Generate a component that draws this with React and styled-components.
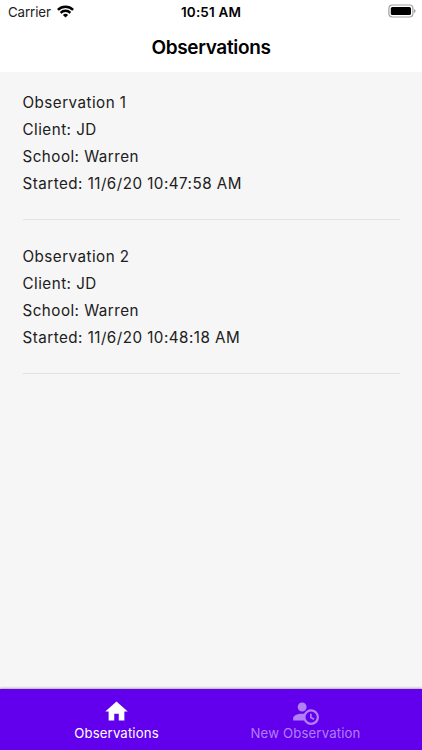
import React from "react";
import styled, { createGlobalStyle } from "styled-components";

const GlobalStyle = createGlobalStyle`
  *, *::before, *::after { box-sizing: border-box; }
  body { margin: 0; background: #f6f6f6; font-family: Inter, "Liberation Sans", sans-serif; }
`;

const Screen = styled.div`
  display: flex;
  flex-direction: column;
  width: 422px;
  height: 750px;
  background: #f6f6f6;
  overflow: hidden;
`;

const Header = styled.header`
  flex: 0 0 72px;
  background: #fff;
  color: #000;
`;

const StatusBar = styled.div`
  display: grid;
  grid-template-columns: 1fr auto 1fr;
  align-items: center;
  height: 23px;
  padding: 0 6px 0 8px;
`;

const Carrier = styled.div`
  display: flex;
  align-items: center;
  gap: 6px;
  font-size: 13.3px;
  line-height: 20px;
  letter-spacing: -0.1px;
  color: #222;
  padding-top: 1px;
  svg { flex: none; margin-top: -1px; }
`;

const Clock = styled.div`
  font-size: 13.5px;
  line-height: 20px;
  font-weight: 600;
  letter-spacing: 0.15px;
  padding-top: 1px;
  margin: 0 1px 0 -1px;
`;

const Battery = styled.svg`
  justify-self: end;
  margin-top: -1px;
`;

const Title = styled.h1`
  margin: 12px 0 0;
  font-size: 19px;
  line-height: 26px;
  font-weight: 600;
  letter-spacing: -0.33px;
  text-align: center;
`;

const List = styled.main`
  flex: 1;
  padding: 0 22.5px;
`;

const Entry = styled.section`
  height: 153.5px;
  padding-top: 23px;
  border-bottom: 1px solid #e2e2e2;
  &:first-child { height: 148px; padding-top: 17px; }
`;

const Line = styled.p`
  margin: 0;
  font-size: 15.2px;
  line-height: 27px;
  letter-spacing: 0.47px;
  color: #202020;
  white-space: nowrap;
`;

const TabBar = styled.nav`
  display: flex;
  justify-content: center;
  flex: 0 0 61px;
  background: #6200ee;
  box-shadow: 0 -1px 2px rgba(0, 0, 0, 0.3);
`;

const Tab = styled.div`
  display: flex;
  flex-direction: column;
  align-items: center;
  width: 189px;
  padding-top: 8.5px;
  color: ${(p) => (p.$active ? "#fff" : "#b17ff6")};
  svg { margin-left: -1px; }
`;

const TabLabel = styled.span`
  margin-top: -1px;
  font-size: 13.2px;
  line-height: 18px;
  letter-spacing: 0.14px;
  white-space: nowrap;
`;

const HOME = "M10,20V14H14V20H19V12H22L12,3L2,12H5V20H10Z";
const ACCOUNT_CLOCK =
  "M10.63,14.1C12.23,10.58 16.38,9.03 19.9,10.63C23.42,12.23 24.97,16.38 23.37,19.9C22.24,22.4 19.75,24 17,24C14.3,24 11.83,22.44 10.67,20H1V18C1.06,16.86 1.84,15.93 3.34,15.18C4.84,14.43 6.72,14.04 9,14C9.57,14 10.11,14.05 10.63,14.1V14.1M9,4C10.12,4.03 11.06,4.42 11.81,5.17C12.56,5.92 12.93,6.86 12.93,8C12.93,9.14 12.56,10.08 11.81,10.83C11.06,11.58 10.12,11.95 9,11.95C7.88,11.95 6.94,11.58 6.19,10.83C5.44,10.08 5.07,9.14 5.07,8C5.07,6.86 5.44,5.92 6.19,5.17C6.94,4.42 7.88,4.03 9,4M17,22A5,5 0 0,0 22,17A5,5 0 0,0 17,12A5,5 0 0,0 12,17A5,5 0 0,0 17,22M16,14H17.5V16.82L19.94,18.23L19.19,19.53L16,17.69V14Z";

const TabIcon = ({ path }) => (
  <svg width="27" height="27" viewBox="0 0 24 24" fill="currentColor">
    <path d={path} />
  </svg>
);

const WifiIcon = () => (
  <svg width="17" height="13" viewBox="0 0 17 13" fill="none" stroke="#000" strokeWidth="2.4">
    <path d="M0.9 4.9 A10.8 10.8 0 0 1 16.1 4.9" />
    <path d="M3.6 7.8 A7 7 0 0 1 13.4 7.8" />
    <path d="M8.5 12.6 L5.9 10 A3.7 3.7 0 0 1 11.1 10 Z" fill="#000" stroke="none" />
  </svg>
);

const observations = [
  { name: "Observation 1", client: "JD", school: "Warren", started: "11/6/20 10:47:58 AM" },
  { name: "Observation 2", client: "JD", school: "Warren", started: "11/6/20 10:48:18 AM" },
];

const tabs = [
  { label: "Observations", icon: HOME, active: true },
  { label: "New Observation", icon: ACCOUNT_CLOCK, active: false },
];

export default function App() {
  return (
    <Screen>
      <GlobalStyle />
      <Header>
        <StatusBar>
          <Carrier>
            Carrier
            <WifiIcon />
          </Carrier>
          <Clock>10:51 AM</Clock>
          <Battery width="28" height="14" viewBox="0 0 28 14">
            <rect x="0.9" y="1" width="24" height="12" rx="3.4" fill="none" stroke="#a3a1a3" strokeWidth="1.2" />
            <rect x="2.8" y="2.9" width="20.2" height="8.2" rx="1.6" fill="#000" />
            <path d="M26 5 Q27.6 5.5 27.6 7 Q27.6 8.5 26 9 Z" fill="#a3a1a3" />
          </Battery>
        </StatusBar>
        <Title>Observations</Title>
      </Header>
      <List>
        {observations.map((o) => (
          <Entry key={o.name}>
            <Line>{o.name}</Line>
            <Line>Client: {o.client}</Line>
            <Line>School: {o.school}</Line>
            <Line>Started: {o.started}</Line>
          </Entry>
        ))}
      </List>
      <TabBar>
        {tabs.map((t) => (
          <Tab key={t.label} $active={t.active}>
            <TabIcon path={t.icon} />
            <TabLabel>{t.label}</TabLabel>
          </Tab>
        ))}
      </TabBar>
    </Screen>
  );
}
